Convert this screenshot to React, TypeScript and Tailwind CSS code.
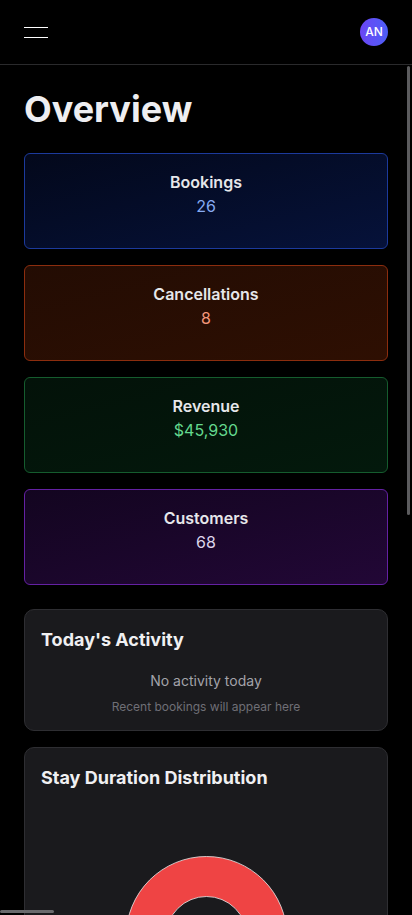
import React from "react"

type Stat = {
  label: string
  value: string
  box: string
  valueColor: string
}

const stats: Stat[] = [
  {
    label: "Bookings",
    value: "26",
    box: "border-[#1c3a9c] bg-gradient-to-br from-[#03081b] to-[#06123a]",
    valueColor: "text-[#86aaf2]",
  },
  {
    label: "Cancellations",
    value: "8",
    box: "border-[#8c2d0e] bg-gradient-to-br from-[#230c03] to-[#2e0f02]",
    valueColor: "text-[#f3967a]",
  },
  {
    label: "Revenue",
    value: "$45,930",
    box: "border-[#155c2e] bg-gradient-to-br from-[#031209] to-[#03190c]",
    valueColor: "text-[#63d98e]",
  },
  {
    label: "Customers",
    value: "68",
    box: "border-[#6421a3] bg-gradient-to-br from-[#130520] to-[#220736]",
    valueColor: "text-[#dcd4ea]",
  },
]

function Donut() {
  // single slice, so the ring is closed
  return (
    <svg width="331" height="260" viewBox="0 0 331 260" className="block">
      <circle cx="165.5" cy="129" r="60.5" fill="none" stroke="#ef4444" strokeWidth="40" />
      <circle cx="165.5" cy="129" r="80.5" fill="none" stroke="#e8e8e8" strokeOpacity="0.8" strokeWidth="1" />
      <circle cx="165.5" cy="129" r="40.5" fill="none" stroke="#e8e8e8" strokeOpacity="0.8" strokeWidth="1" />
    </svg>
  )
}

export default function App() {
  return (
    <div className="h-screen flex flex-col bg-black text-[#ececef] overflow-hidden font-['Inter',_'Liberation_Sans',_sans-serif]">
      <header className="h-[65px] shrink-0 flex items-center justify-between px-6 border-b border-[#2a2a2c]">
        <button className="flex flex-col gap-[9px] w-6">
          <span className="block h-px w-6 bg-white" />
          <span className="block h-px w-6 bg-white" />
        </button>
        <div className="w-7 h-7 rounded-full bg-gradient-to-r from-[#6a45f4] to-[#4c5ef7] flex items-center justify-center text-xs font-medium text-white">
          AN
        </div>
      </header>

      <main className="relative flex-1 overflow-hidden">
        <div className="p-6">
          <h1 className="text-4xl font-bold text-[#eeeef1] mb-6">Overview</h1>

          <div className="grid gap-4 mb-6">
            {stats.map(s => (
              <div key={s.label} className={`h-24 rounded-md border p-4 text-center ${s.box}`}>
                <div className="text-base font-semibold text-[#e6e7ea]">{s.label}</div>
                <div className={`text-base ${s.valueColor}`}>{s.value}</div>
              </div>
            ))}
          </div>

          <div className="space-y-4">
            <section className="rounded-[10px] border border-[#2e2e32] bg-[#1a1a1d] p-4 pb-[15px]">
              <h2 className="text-lg font-bold text-[#f0f0f2] mb-4">Today's Activity</h2>
              <p className="text-center text-sm text-[#a3a3aa] pt-px">No activity today</p>
              <p className="text-center text-xs text-[#6f6f76] mt-2">Recent bookings will appear here</p>
            </section>

            <section className="rounded-[10px] border border-[#2e2e32] bg-[#1a1a1d] p-4">
              <h2 className="text-lg font-bold text-[#f0f0f2] mb-4">Stay Duration Distribution</h2>
              <Donut />
            </section>
          </div>
        </div>

        {/* overlay scrollbars */}
        <div className="absolute right-[2px] top-px w-[3px] h-[449px] rounded-full bg-[#5c5c5e]" />
        <div className="absolute left-0 bottom-[2px] w-[54px] h-[3px] rounded-full bg-[#6a6a6d]" />
      </main>
    </div>
  )
}
